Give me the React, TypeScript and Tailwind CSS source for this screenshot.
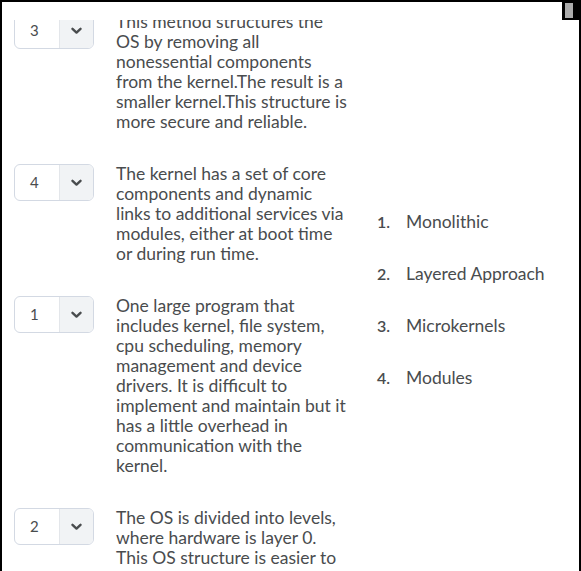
import React from "react";

const items = [
  {
    n: "3",
    text: "This method structures the OS by removing all nonessential components from the kernel.The result is a smaller kernel.This structure is more secure and reliable.",
  },
  {
    n: "4",
    text: "The kernel has a set of core components and dynamic links to additional services via modules, either at boot time or during run time.",
  },
  {
    n: "1",
    text: "One large program that includes kernel, file system, cpu scheduling, memory management and device drivers. It is difficult to implement and maintain but it has a little overhead in communication with the kernel.",
  },
  {
    n: "2",
    text: "The OS is divided into levels, where hardware is layer 0. This OS structure is easier to debug and modify.",
  },
];

const choices = ["Monolithic", "Layered Approach", "Microkernels", "Modules"];

function Select({ n }: { n: string }) {
  return (
    <div className="flex h-[37px] w-[80px] shrink-0 overflow-hidden rounded-[6px] border border-[#d3d9e3] bg-white">
      <div className="flex w-[44px] items-center pl-[15px] text-[15px] text-[#494c4e]">{n}</div>
      <div className="flex flex-1 items-center justify-center border-l border-[#e3e6ea] bg-[#f1f3f5]">
        <svg width="11" height="8" viewBox="0 0 11 8">
          <path d="M1.5 1.8 L5.5 5.6 L9.5 1.8" fill="none" stroke="#494c4e" strokeWidth="2.4" strokeLinecap="round" strokeLinejoin="round" />
        </svg>
      </div>
    </div>
  );
}

export default function App() {
  return (
    <div
      className="relative h-[571px] w-[581px] overflow-hidden border-x-2 border-t-2 border-black bg-white text-[#494c4e]"
      style={{ fontFamily: "Lato, 'Open Sans', sans-serif" }}
    >
      <div className="absolute right-0 top-[-2px] h-[20px] w-[17px] bg-black">
        <div className="ml-[3px] mt-[3px] h-[15px] w-[8px] bg-[#ababab]" />
      </div>
      <div className="mt-[18px] h-[551px] overflow-hidden">
        <div className="mt-[-8px] flex">
          <div className="ml-[12px] flex flex-col gap-[32px]">
            {items.map((it) => (
              <div key={it.n} className="flex gap-[22px]">
                <Select n={it.n} />
                <p className="w-[231px] text-[17.5px] leading-[20px]">{it.text}</p>
              </div>
            ))}
          </div>
          <ol className="ml-[30px] mt-[200px] flex flex-col gap-[32px]">
            {choices.map((c, i) => (
              <li key={c} className="flex items-baseline text-[17.5px] leading-[20px]">
                <span className="w-[29px] text-[16px] font-semibold">{i + 1}.</span>
                <span>{c}</span>
              </li>
            ))}
          </ol>
        </div>
      </div>
    </div>
  );
}
